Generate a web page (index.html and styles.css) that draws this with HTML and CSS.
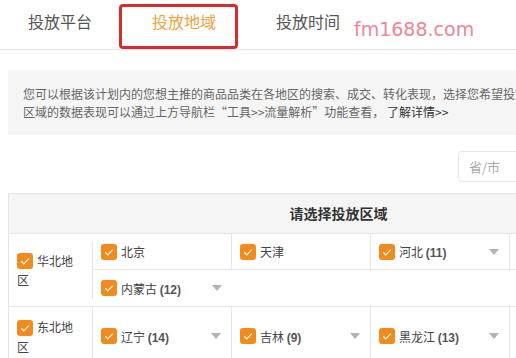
FILE: index.html
```html
<!DOCTYPE html>
<html lang="zh-CN">
<head>
<meta charset="utf-8">
<title>投放地域</title>
<link rel="stylesheet" href="styles.css">
</head>
<body>
<div class="page">
  <div class="tabbar">
    <div class="tab">投放平台</div>
    <div class="tab active">投放地域</div>
    <div class="tab">投放时间</div>
  </div>
  <div class="mark-box"></div>
  <div class="watermark">fm1688.com</div>

  <div class="wrap">
    <div class="info">
      <div class="line">您可以根据该计划内的您想主推的商品品类在各地区的搜索、成交、转化表现，选择您希望投放的区域。各</div>
      <div class="line">区域的数据表现可以通过上方导航栏“工具&gt;&gt;流量解析”功能查看， <a class="more">了解详情&gt;&gt;</a></div>
    </div>

    <div class="toolbar">
      <input class="search" type="text" placeholder="省/市">
    </div>

    <div class="table">
      <div class="thead">请选择投放区域</div>

      <div class="region">
        <div class="rname">
          <svg class="cb" viewBox="0 0 16 16" width="16" height="16"><rect width="16" height="16" rx="3" fill="#f28b1c"/><path d="M4.2 8.3l2.6 2.6L11.8 5.6" fill="none" stroke="#fff" stroke-width="1.3"/></svg>华北地区
        </div>
        <div class="subs">
          <div class="subrow">
            <div class="cell">
              <svg class="cb" viewBox="0 0 16 16" width="16" height="16"><rect width="16" height="16" rx="3" fill="#f28b1c"/><path d="M4.2 8.3l2.6 2.6L11.8 5.6" fill="none" stroke="#fff" stroke-width="1.3"/></svg>
              <span class="label">北京</span>
            </div>
            <div class="cell">
              <svg class="cb" viewBox="0 0 16 16" width="16" height="16"><rect width="16" height="16" rx="3" fill="#f28b1c"/><path d="M4.2 8.3l2.6 2.6L11.8 5.6" fill="none" stroke="#fff" stroke-width="1.3"/></svg>
              <span class="label">天津</span>
            </div>
            <div class="cell">
              <svg class="cb" viewBox="0 0 16 16" width="16" height="16"><rect width="16" height="16" rx="3" fill="#f28b1c"/><path d="M4.2 8.3l2.6 2.6L11.8 5.6" fill="none" stroke="#fff" stroke-width="1.3"/></svg>
              <span class="label">河北 <b>(11)</b></span>
              <span class="caret"></span>
            </div>
            <div class="cell"></div>
          </div>
          <div class="subrow">
            <div class="cell open">
              <svg class="cb" viewBox="0 0 16 16" width="16" height="16"><rect width="16" height="16" rx="3" fill="#f28b1c"/><path d="M4.2 8.3l2.6 2.6L11.8 5.6" fill="none" stroke="#fff" stroke-width="1.3"/></svg>
              <span class="label">内蒙古 <b>(12)</b></span>
              <span class="caret"></span>
            </div>
          </div>
        </div>
      </div>

      <div class="region">
        <div class="rname">
          <svg class="cb" viewBox="0 0 16 16" width="16" height="16"><rect width="16" height="16" rx="3" fill="#f28b1c"/><path d="M4.2 8.3l2.6 2.6L11.8 5.6" fill="none" stroke="#fff" stroke-width="1.3"/></svg>东北地区
        </div>
        <div class="subs">
          <div class="subrow">
            <div class="cell">
              <svg class="cb" viewBox="0 0 16 16" width="16" height="16"><rect width="16" height="16" rx="3" fill="#f28b1c"/><path d="M4.2 8.3l2.6 2.6L11.8 5.6" fill="none" stroke="#fff" stroke-width="1.3"/></svg>
              <span class="label">辽宁 <b>(14)</b></span>
              <span class="caret"></span>
            </div>
            <div class="cell">
              <svg class="cb" viewBox="0 0 16 16" width="16" height="16"><rect width="16" height="16" rx="3" fill="#f28b1c"/><path d="M4.2 8.3l2.6 2.6L11.8 5.6" fill="none" stroke="#fff" stroke-width="1.3"/></svg>
              <span class="label">吉林 <b>(9)</b></span>
              <span class="caret"></span>
            </div>
            <div class="cell">
              <svg class="cb" viewBox="0 0 16 16" width="16" height="16"><rect width="16" height="16" rx="3" fill="#f28b1c"/><path d="M4.2 8.3l2.6 2.6L11.8 5.6" fill="none" stroke="#fff" stroke-width="1.3"/></svg>
              <span class="label">黑龙江 <b>(13)</b></span>
              <span class="caret"></span>
            </div>
          </div>
        </div>
      </div>
    </div>
  </div>
</div>
</body>
</html>
```
FILE: styles.css
```css
* { box-sizing: border-box; }
html, body { margin: 0; padding: 0; background: #fff; overflow: hidden; }
body {
  font-family: "Liberation Sans", "Noto Sans CJK SC", sans-serif;
  font-size: 12px;
  color: #333;
  width: 516px;
  height: 358px;
}
.page { position: relative; width: 700px; }

.tabbar {
  display: flex;
  gap: 60px;
  padding-left: 28px;
  height: 50px;
  border-bottom: 1px solid #e8e8e8;
}
.tab {
  font-size: 16px;
  line-height: 42px;
  color: #555;
  font-family: "Noto Sans CJK SC", sans-serif;
}
.tab.active { color: #f0a33e; }

.mark-box {
  position: absolute;
  left: 119px;
  top: 4px;
  width: 119px;
  height: 45px;
  border: 3px solid #d92a2c;
  border-radius: 4px;
}
.watermark {
  position: absolute;
  left: 354px;
  top: 17px;
  font-family: "DejaVu Sans", sans-serif;
  font-size: 19px;
  line-height: 24px;
  color: #ef8593;
}

.wrap { padding: 20px 0 0 8px; width: 668px; }

.info {
  background: #f5f5f5;
  padding: 15px 0 14px 15px;
  color: #666;
  line-height: 18px;
  font-family: "Noto Sans CJK SC", sans-serif;
  height: 65px;
}
.info .line { white-space: nowrap; overflow: hidden; }
.info .more { color: #333; }

.toolbar {
  display: flex;
  justify-content: flex-end;
  padding-top: 16px;
  height: 58px;
}
.search {
  width: 210px;
  height: 31px;
  border: 1px solid #e6e6e6;
  border-radius: 4px;
  padding: 0 10px;
  font-family: "Noto Sans CJK SC", sans-serif;
  font-size: 13px;
  color: #333;
  outline: none;
}
.search::placeholder { color: #aaa; }

.table {
  border-left: 1px solid #e6e6e6;
  border-top: 1px solid #e6e6e6;
  width: 660px;
}
.thead {
  background: #f5f5f5;
  height: 40px;
  line-height: 39px;
  text-align: center;
  font-size: 14px;
  font-weight: bold;
  color: #333;
  font-family: "Noto Sans CJK SC", sans-serif;
  border-bottom: 1px solid #e6e6e6;
}

.region {
  display: flex;
  border-bottom: 1px solid #e6e6e6;
}
.rname {
  width: 84px;
  flex: none;
  border-right: 1px solid #e6e6e6;
  padding: 10px 17px 10px 8px;
  line-height: 19px;
  font-size: 12px;
  color: #444;
  display: flex;
  align-items: center;
  flex-wrap: wrap;
  font-family: "Noto Sans CJK SC", sans-serif;
}
.rname .cb { vertical-align: middle; margin-right: 4px; position: relative; top: -1px; }
.rname { display: block; align-self: center; }

.subs { flex: 1; display: flex; flex-direction: column; }
.subrow {
  display: flex;
  flex: 1;
  min-height: 36px;
  border-bottom: 1px solid #e6e6e6;
}
.subrow:last-child { border-bottom: none; }

.cell {
  width: 139px;
  flex: none;
  display: flex;
  align-items: center;
  padding: 0 10px 0 8px;
  border-right: 1px solid #e6e6e6;
}
.cell.open { border-right: none; }
.cb { flex: none; display: inline-block; }
.label {
  margin-left: 4px;
  color: #444;
  font-family: "Noto Sans CJK SC", sans-serif;
  white-space: nowrap;
}
.label b {
  font-family: "Liberation Sans", sans-serif;
  font-weight: bold;
  color: #555;
}
.caret {
  margin-left: auto;
  width: 0;
  height: 0;
  border-left: 5px solid transparent;
  border-right: 5px solid transparent;
  border-top: 6px solid #b3b3b3;
}
```
